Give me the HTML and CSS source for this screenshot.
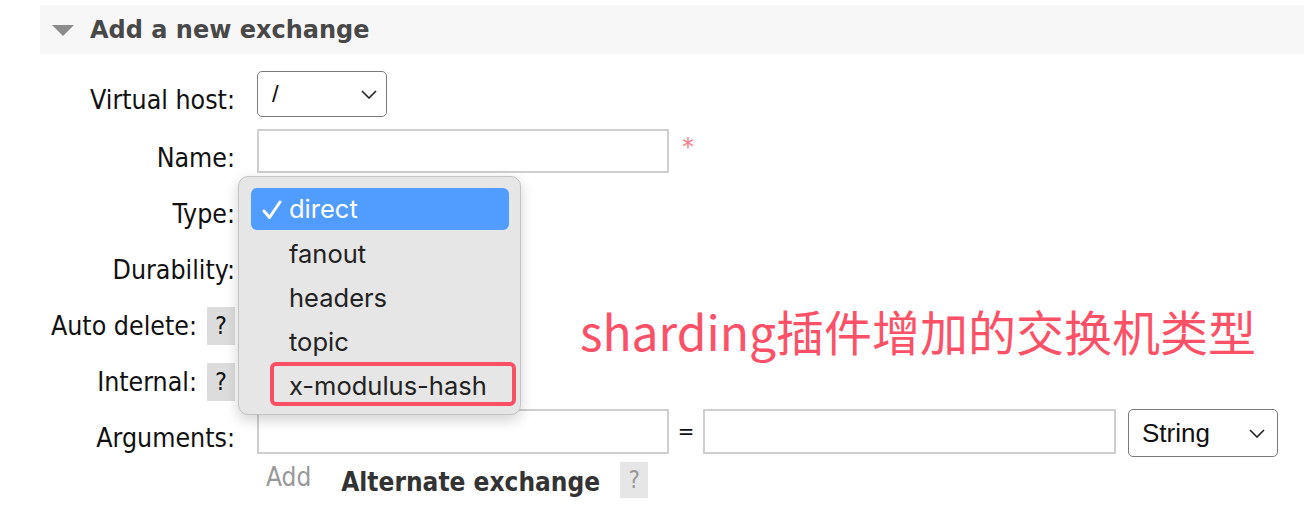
FILE: index.html
```html
<!DOCTYPE html>
<html>
<head>
<meta charset="utf-8">
<link rel="stylesheet" href="styles.css">
</head>
<body>
<div class="page">
  <div class="section-head">
    <span class="tri"></span>
    <h2 class="title">Add a new exchange</h2>
  </div>
  <div class="form">
    <div class="row row-first">
      <div class="label"><span class="ltext">Virtual host:</span></div>
      <div class="field">
        <div class="select vhost"><span>/</span><svg class="chev" viewBox="0 0 16 9"><path d="M1 1l7 7 7-7" fill="none" stroke="#222" stroke-width="1.6"/></svg></div>
      </div>
    </div>
    <div class="row">
      <div class="label"><span class="ltext">Name:</span></div>
      <div class="field">
        <div class="input name"></div>
        <span class="req">*</span>
      </div>
    </div>
    <div class="row">
      <div class="label"><span class="ltext">Type:</span></div>
      <div class="field"></div>
    </div>
    <div class="row">
      <div class="label"><span class="ltext">Durability:</span></div>
      <div class="field"></div>
    </div>
    <div class="row">
      <div class="label"><span class="ltext">Auto delete:</span><span class="help">?</span></div>
      <div class="field"></div>
    </div>
    <div class="row">
      <div class="label"><span class="ltext">Internal:</span><span class="help">?</span></div>
      <div class="field"></div>
    </div>
    <div class="row">
      <div class="label"><span class="ltext">Arguments:</span></div>
      <div class="field">
        <div class="input arg"></div>
        <span class="eq">=</span>
        <div class="input arg arg2"></div>
        <div class="select str"><span>String</span><svg class="chev" viewBox="0 0 16 9"><path d="M1 1l7 7 7-7" fill="none" stroke="#222" stroke-width="1.6"/></svg></div>
      </div>
    </div>
    <div class="row row-add">
      <div class="label"></div>
      <div class="field">
        <span class="add">Add</span>
        <span class="alt">Alternate exchange</span>
        <span class="help help-light">?</span>
      </div>
    </div>
  </div>

  <div class="menu">
    <div class="item sel"><svg class="check" viewBox="0 0 20 20"><path d="M2 11l5.5 6.5L18 2" fill="none" stroke="#fff" stroke-width="3" stroke-linecap="round" stroke-linejoin="round"/></svg>direct</div>
    <div class="item">fanout</div>
    <div class="item">headers</div>
    <div class="item">topic</div>
    <div class="item">x-modulus-hash</div>
    <div class="mark"></div>
  </div>

  <div class="note">sharding插件增加的交换机类型</div>
</div>
</body>
</html>
```

FILE: styles.css
```css
html, body {
  margin: 0;
  padding: 0;
  background: #fff;
}
.page {
  position: relative;
  width: 1304px;
  height: 516px;
  overflow: hidden;
  padding-left: 40px;
  box-sizing: border-box;
  font-family: "DejaVu Sans Condensed", "DejaVu Sans", sans-serif;
  color: #111;
}
.section-head {
  margin-top: 5px;
  height: 49px;
  background: #f7f7f7;
  display: flex;
  align-items: center;
  padding-left: 12px;
}
.tri {
  width: 0;
  height: 0;
  border-left: 11px solid transparent;
  border-right: 11px solid transparent;
  border-top: 11px solid #8c8c8c;
  margin-right: 16px;
  margin-top: 2px;
}
.title {
  margin: 0;
  font-family: "DejaVu Sans", sans-serif;
  font-weight: bold;
  font-size: 24px;
  color: #484848;
}
.form {
  margin-top: 17px;
}
.row {
  display: flex;
  height: 56px;
}
.row-first {
  height: 58px;
}
.label {
  width: 195px;
  display: flex;
  justify-content: flex-end;
  align-items: flex-start;
  gap: 10px;
  font-size: 26.5px;
  line-height: 30px;
}
.ltext {
  padding-top: 14px;
}
.help {
  width: 28px;
  height: 38px;
  margin-top: 10px;
  background: #dcdcdc;
  display: flex;
  align-items: center;
  justify-content: center;
  font-size: 25px;
  color: #111;
}
.field {
  margin-left: 22px;
  display: flex;
  align-items: flex-start;
}
.select {
  box-sizing: border-box;
  border: 1.5px solid #7a7a7a;
  border-radius: 5px;
  background: #fff;
  display: flex;
  align-items: center;
  justify-content: space-between;
}
.vhost {
  width: 130px;
  height: 46px;
  padding: 0 9px 0 14px;
  font-family: "Liberation Sans", sans-serif;
  font-size: 24px;
}
.chev {
  width: 16px;
  height: 9px;
}
.input {
  box-sizing: border-box;
  border: 2px solid #cfcfcf;
  background: #fff;
  height: 44px;
}
.name {
  width: 412px;
}
.req {
  color: #f77b86;
  font-family: "DejaVu Sans", sans-serif;
  font-size: 24px;
  margin-left: 13px;
  margin-top: 4px;
}
.arg {
  width: 412px;
  height: 45px;
}
.eq {
  width: 34px;
  text-align: center;
  font-size: 22px;
  line-height: 45px;
}
.arg2 {
  width: 413px;
}
.str {
  margin-left: 12px;
  width: 150px;
  height: 48px;
  padding: 0 12px 0 13px;
  font-family: "Liberation Sans", sans-serif;
  font-size: 26px;
  color: #111;
}
.row-add {
  height: 40px;
  margin-top: -3px;
}
.add {
  margin-left: 9px;
  color: #999;
  font-size: 26px;
  line-height: 30px;
}
.alt {
  margin-left: 30px;
  margin-top: 5px;
  font-weight: bold;
  font-size: 26px;
  line-height: 30px;
  color: #333;
}
.help-light {
  margin-left: 20px;
  margin-top: 0;
  height: 36px;
  background: #e6e6e6;
  color: #999;
  font-size: 24px;
}
.menu {
  position: absolute;
  left: 238px;
  top: 176px;
  width: 283px;
  height: 239px;
  box-sizing: border-box;
  padding: 11px 11px 0 12px;
  background: #e6e6e6;
  border: 1px solid #c4c4c4;
  border-radius: 10px;
  box-shadow: 0 5px 14px rgba(0, 0, 0, 0.18);
  font-family: Inter, "Open Sans", sans-serif;
  font-size: 25.5px;
  color: #222;
}
.item {
  height: 44px;
  line-height: 44px;
  padding-left: 38px;
  position: relative;
}
.item.sel {
  height: 42px;
  line-height: 42px;
  margin-bottom: 2px;
  background: #519cff;
  color: #fff;
  border-radius: 6px;
}
.check {
  position: absolute;
  left: 11px;
  top: 12px;
  width: 20px;
  height: 20px;
}
.mark {
  position: absolute;
  left: 31px;
  top: 185px;
  width: 246px;
  height: 44px;
  box-sizing: border-box;
  border: 4px solid #fb4f66;
  border-radius: 6px;
}
.note {
  position: absolute;
  left: 580px;
  top: 297px;
  font-family: "Noto Sans CJK SC", sans-serif;
  font-size: 48px;
  line-height: 66px;
  color: #fc5166;
  white-space: nowrap;
}
```
